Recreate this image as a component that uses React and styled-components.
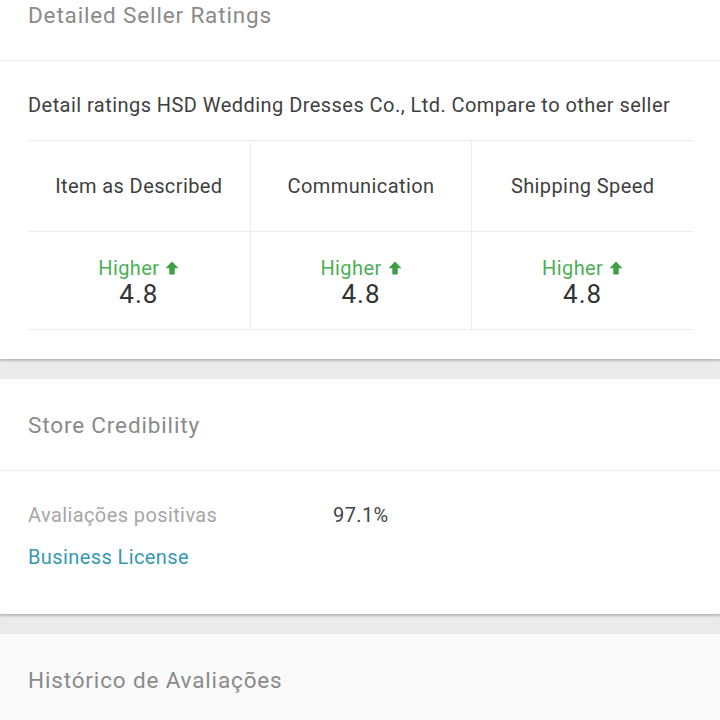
import React from "react";
import styled, { createGlobalStyle } from "styled-components";

const Global = createGlobalStyle`
  html, body { margin: 0; padding: 0; background: #ebebeb; }
  body { font-family: Roboto, "Noto Sans", Arial, sans-serif; }
`;

const Page = styled.div`
  display: flex;
  flex-direction: column;
  gap: 20px;
  width: 720px;
  margin-top: -31px;
`;

const Card = styled.section`
  background: ${(p) => (p.$muted ? "#fafafa" : "#fff")};
  box-shadow: 0 2px 2px rgba(0, 0, 0, 0.22);
`;

const CardHeader = styled.h2`
  margin: 0;
  height: 92px;
  display: flex;
  align-items: center;
  padding: 0 28px;
  font-size: 22.5px;
  letter-spacing: 0.85px;
  font-weight: 400;
  color: #8a8a8a;
  border-bottom: ${(p) => (p.$noLine ? "none" : "1px solid #ececec")};
  box-sizing: border-box;
`;

const Body = styled.div`
  padding: 0 27px ${(p) => p.$bottom || 29}px 28px;
`;

const Intro = styled.p`
  margin: 0;
  height: 79px;
  padding-top: 9px;
  box-sizing: border-box;
  display: flex;
  align-items: center;
  font-size: 20px;
  letter-spacing: 0.45px;
  color: #3f3f3f;
  white-space: nowrap;
`;

const Table = styled.div`
  display: grid;
  grid-template-columns: repeat(3, 1fr);
  border-top: 1px solid #ececec;
  border-bottom: 1px solid #ececec;
`;

const Cell = styled.div`
  height: ${(p) => (p.$head ? "90px" : "98px")};
  padding-top: ${(p) => (p.$head ? "0" : "4px")};
  box-sizing: border-box;
  display: flex;
  flex-direction: column;
  align-items: center;
  justify-content: center;
  border-left: ${(p) => (p.$first ? "none" : "1px solid #ececec")};
  border-top: ${(p) => (p.$head ? "none" : "1px solid #ececec")};
  font-size: 20px;
  letter-spacing: 0.4px;
  color: #404040;
`;

const Trend = styled.div`
  display: flex;
  align-items: center;
  gap: 6px;
  color: #4cae55;
  font-size: 20px;
  letter-spacing: 0.4px;
  line-height: 22px;
`;

const Score = styled.div`
  font-size: 26px;
  letter-spacing: 1px;
  line-height: 30px;
  color: #333;
`;

const Row = styled.div`
  display: flex;
  align-items: center;
  height: 42px;
  margin-top: ${(p) => (p.$first ? "23px" : "0")};
  font-size: 20px;
  letter-spacing: 0.4px;
`;

const Label = styled.span`
  width: 305px;
  color: #a6a6a6;
`;

const Value = styled.span`
  color: #444;
`;

const Link = styled.a`
  color: #3598b2;
  text-decoration: none;
`;

const Up = () => (
  <svg width="14" height="14" viewBox="0 0 13 13">
    <path d="M6.5 0.5 L12.5 6.8 L9 6.8 L9 12.5 L4 12.5 L4 6.8 L0.5 6.8 Z" fill="#3d9f46" />
  </svg>
);

const cats = ["Item as Described", "Communication", "Shipping Speed"];

export default function App() {
  return (
    <>
      <Global />
      <Page>
        <Card>
          <CardHeader>Detailed Seller Ratings</CardHeader>
          <Body>
            <Intro>Detail ratings HSD Wedding Dresses Co., Ltd. Compare to other seller</Intro>
            <Table>
              {cats.map((c, i) => (
                <Cell key={c} $head $first={i === 0}>{c}</Cell>
              ))}
              {cats.map((c, i) => (
                <Cell key={c + "v"} $first={i === 0}>
                  <Trend>Higher <Up /></Trend>
                  <Score>4.8</Score>
                </Cell>
              ))}
            </Table>
          </Body>
        </Card>
        <Card>
          <CardHeader>Store Credibility</CardHeader>
          <Body $bottom={36}>
            <Row $first>
              <Label>Avaliações positivas</Label>
              <Value>97.1%</Value>
            </Row>
            <Row>
              <Link href="#">Business License</Link>
            </Row>
          </Body>
        </Card>
        <Card $muted>
          <CardHeader $noLine>Histórico de Avaliações</CardHeader>
        </Card>
      </Page>
    </>
  );
}
